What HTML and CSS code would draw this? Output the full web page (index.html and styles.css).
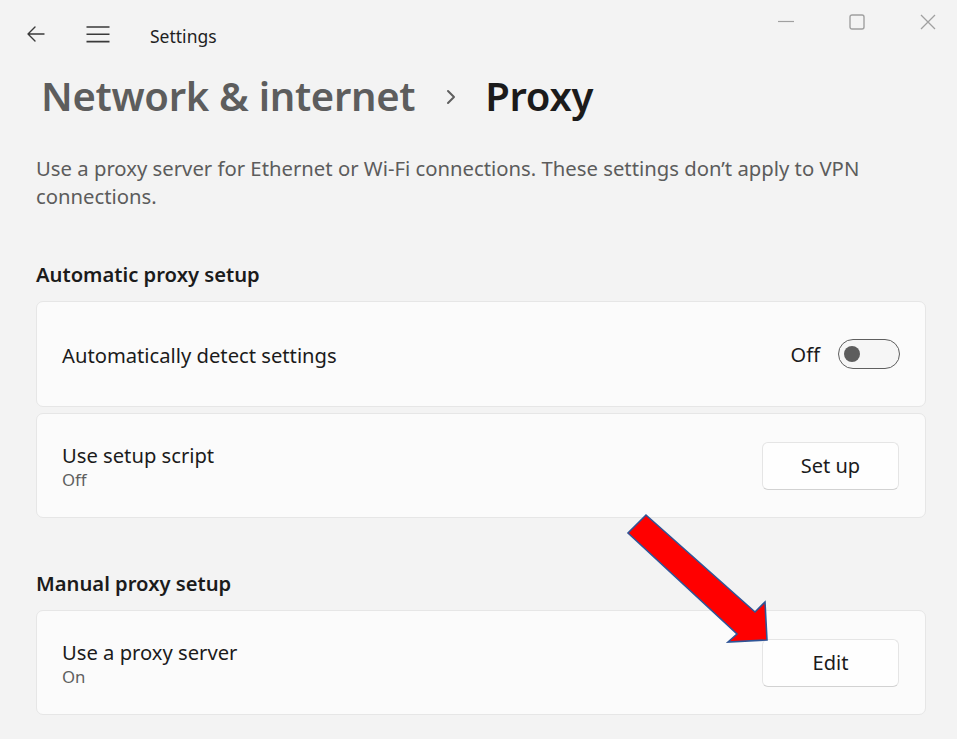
FILE: index.html
```html
<!DOCTYPE html>
<html>
<head>
<meta charset="utf-8">
<link rel="stylesheet" href="styles.css">
</head>
<body>
<div class="window">
  <div class="titlebar">
    <div class="tb-left">
      <svg class="back" width="18" height="16" viewBox="0 0 18 16"><path d="M8 1 L1 8 L8 15 M1 8 H17" fill="none" stroke="#3a3a3a" stroke-width="1.4" stroke-linecap="round" stroke-linejoin="round"/></svg>
      <svg class="menu" width="24" height="17" viewBox="0 0 24 17"><path d="M0.5 1 H23.5 M0.5 8.3 H23.5 M0.5 15.6 H23.5" stroke="#3a3a3a" stroke-width="1.6" fill="none"/></svg>
      <span class="app-title">Settings</span>
    </div>
    <div class="tb-controls">
      <svg width="16" height="16" viewBox="0 0 16 16"><path d="M0 7.5 H16" stroke="#a0a0a0" stroke-width="1.2"/></svg>
      <svg width="16" height="16" viewBox="0 0 16 16"><rect x="1" y="1" width="14" height="14" rx="2" fill="none" stroke="#a0a0a0" stroke-width="1.4"/></svg>
      <svg width="16" height="16" viewBox="0 0 16 16"><path d="M1 1 L15 15 M15 1 L1 15" stroke="#a0a0a0" stroke-width="1.3"/></svg>
    </div>
  </div>

  <main class="content">
    <h1 class="crumbs"><span class="crumb-parent">Network &amp; internet</span><svg class="chev" width="10" height="16" viewBox="0 0 10 16"><path d="M2 2 L8 8 L2 14" fill="none" stroke="#5f5f5f" stroke-width="2" stroke-linecap="round" stroke-linejoin="round"/></svg><span class="crumb-current">Proxy</span></h1>

    <p class="desc">Use a proxy server for Ethernet or Wi-Fi connections. These settings don’t apply to VPN connections.</p>

    <h2 class="section-title">Automatic proxy setup</h2>
    <div class="cards">
      <div class="card card-tall">
        <div class="card-text"><div class="card-label">Automatically detect settings</div></div>
        <div class="card-action">
          <span class="toggle-label">Off</span>
          <span class="toggle"><span class="knob"></span></span>
        </div>
      </div>
      <div class="card">
        <div class="card-text">
          <div class="card-label">Use setup script</div>
          <div class="card-sub">Off</div>
        </div>
        <div class="card-action"><button class="btn">Set up</button></div>
      </div>
    </div>

    <h2 class="section-title section-two">Manual proxy setup</h2>
    <div class="cards">
      <div class="card">
        <div class="card-text">
          <div class="card-label">Use a proxy server</div>
          <div class="card-sub">On</div>
        </div>
        <div class="card-action"><button class="btn">Edit</button></div>
      </div>
    </div>
  </main>

  <svg class="arrow" width="957" height="739" viewBox="0 0 957 739">
    <polygon points="646,515 755,612 765,602 767,640 728,642 737,634 628,533" fill="#ff0000" stroke="#2f5597" stroke-width="1.6" stroke-linejoin="miter"/>
  </svg>
</div>
</body>
</html>
```
FILE: styles.css
```css
* { box-sizing: border-box; }
html, body { margin: 0; padding: 0; }
body {
  background: #f3f3f3;
  font-family: "Noto Sans", "Open Sans", sans-serif;
  color: #1b1b1b;
  width: 957px;
  height: 739px;
  overflow: hidden;
}
.window { position: relative; width: 957px; height: 739px; }

.titlebar {
  height: 70px;
  display: flex;
  justify-content: space-between;
  align-items: flex-start;
}
.tb-left {
  display: flex;
  align-items: center;
  height: 70px;
  padding-left: 27px;
}
.back { margin-top: -2px; }
.menu { margin-left: 41px; margin-top: -1px; }
.app-title {
  margin-left: 40px;
  font-size: 17.5px;
  color: #1f1f1f;
  margin-top: 1px;
}
.tb-controls {
  display: flex;
  gap: 55px;
  padding-top: 14px;
  padding-right: 21px;
}

.content {
  padding-left: 36px;
  width: 926px;
}
.crumbs {
  margin: -2px 0 0 0;
  height: 56px;
  display: flex;
  align-items: center;
  font-size: 40px;
  font-weight: 600;
  line-height: 56px;
  letter-spacing: -0.3px;
}
.crumb-parent { color: #5d5d5d; margin-left: 5px; }
.chev { margin: 2px 29px 0 31px; }
.crumb-current { color: #1b1b1b; }

.desc {
  margin: 30px 0 0 0;
  font-size: 20.3px;
  line-height: 28px;
  color: #5c5c5c;
  width: 880px;
}

.section-title {
  margin: 50px 0 13px 0;
  font-size: 20.2px;
  font-weight: 600;
  line-height: 28px;
  color: #1b1b1b;
}
.section-two { margin-top: 51px; }

.cards { display: flex; flex-direction: column; gap: 6px; }
.card {
  height: 105px;
  background: #fbfbfb;
  border: 1px solid #e6e6e6;
  border-radius: 7px;
  display: flex;
  align-items: center;
  justify-content: space-between;
  padding: 0 25px 0 25px;
}
.card-tall { height: 106px; }
.card-text { padding-top: 2px; }
.card-label {
  font-size: 20.2px;
  line-height: 26px;
  color: #1b1b1b;
}
.card-sub {
  font-size: 16.8px;
  line-height: 24px;
  color: #5f5f5f;
}
.card-action { display: flex; align-items: center; }
.toggle-label {
  font-size: 20px;
  color: #1b1b1b;
  margin-right: 18px;
}
.toggle {
  width: 62px;
  height: 30px;
  border: 1.5px solid #5f5f5f;
  border-radius: 15px;
  background: #f6f6f6;
  display: flex;
  align-items: center;
  padding-left: 5px;
}
.knob {
  width: 16px;
  height: 16px;
  border-radius: 50%;
  background: #5d5d5d;
}
.btn {
  width: 137px;
  height: 48px;
  background: #fefefe;
  border: 1px solid #e5e5e5;
  border-bottom-color: #d2d2d2;
  border-radius: 6px;
  font-family: "Noto Sans", "Open Sans", sans-serif;
  font-size: 20px;
  color: #1b1b1b;
  padding: 0;
  margin-right: 1px;
}

.arrow { position: absolute; left: 0; top: 0; pointer-events: none; }
```
